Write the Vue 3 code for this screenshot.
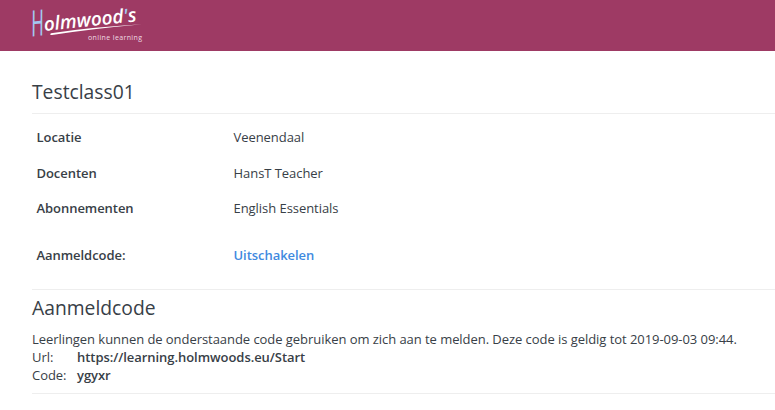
<template>
  <div class="page">
    <header class="topbar">
      <svg class="logo" width="112" height="42" viewBox="0 0 112 42">
        <text class="logo-initial" x="1" y="32.5" textLength="13" lengthAdjust="spacingAndGlyphs" transform="rotate(-6 1 32.5)">H</text>
        <text class="logo-name" x="13.5" y="27" textLength="93" lengthAdjust="spacingAndGlyphs" transform="rotate(-6 13.5 27)">olmwood<tspan class="logo-tick">'</tspan>s</text>
        <path d="M20 29.2 Q60 23.2 111 20.3 Q60 25 21 31 Q18 31 20 29.2Z" fill="#fff" />
        <text class="logo-sub" x="57" y="35.5" textLength="54">online learning</text>
      </svg>
    </header>
    <main class="content">
      <h1 class="title">{{ group.name }}</h1>
      <dl class="details">
        <div v-for="row in rows" :key="row.label" class="row">
          <dt>{{ row.label }}</dt>
          <dd>{{ row.value }}</dd>
        </div>
        <div class="row row-code">
          <dt>Aanmeldcode:</dt>
          <dd><a class="toggle">Uitschakelen</a></dd>
        </div>
      </dl>
      <section class="signup">
        <h2 class="title-code">Aanmeldcode</h2>
        <p>Leerlingen kunnen de onderstaande code gebruiken om zich aan te melden. Deze code is geldig tot {{ group.validUntil }}.</p>
        <div class="line"><span>Url:</span><b>{{ group.url }}</b></div>
        <div class="line"><span>Code:</span><b>{{ group.code }}</b></div>
      </section>
    </main>
  </div>
</template>

<script setup>
const group = {
  name: 'Testclass01',
  url: 'https://learning.holmwoods.eu/Start',
  code: 'ygyxr',
  validUntil: '2019-09-03 09:44'
}

const rows = [
  { label: 'Locatie', value: 'Veenendaal' },
  { label: 'Docenten', value: 'HansT Teacher' },
  { label: 'Abonnementen', value: 'English Essentials' }
]
</script>

<style>
body {
  margin: 0;
  background: #ffffff;
}
</style>

<style scoped>
.page {
  height: 410px;
  overflow: hidden;
  font-family: "Open Sans", "Noto Sans", sans-serif;
  font-size: 13px;
  line-height: 18px;
  color: #384047;
}

.topbar {
  height: 51px;
  box-sizing: border-box;
  padding: 4px 0 0 31px;
  background: #9e3a64;
}

.logo {
  display: block;
  overflow: visible;
}

.logo-initial {
  font-size: 36px;
  font-style: italic;
  font-weight: 400;
  fill: #a3c8f0;
}

.logo-name {
  font-size: 19px;
  font-style: italic;
  font-weight: 600;
  fill: #ffffff;
}

.logo-tick {
  fill: #a3c8f0;
}

.logo-sub {
  font-size: 7px;
  fill: #efdae3;
}

.content {
  padding-left: 32px;
}

.title,
.title-code {
  margin: 0;
  font-size: 19.3px;
  font-weight: 400;
  line-height: 26px;
}

.title {
  padding: 28px 0 8px;
  border-bottom: 1px solid #eeeeee;
}

.details {
  margin: 0;
  padding: 14px 0 25px 4.5px;
  border-bottom: 1px solid #eeeeee;
  letter-spacing: -0.05px;
}

.row {
  display: grid;
  grid-template-columns: 197px 1fr;
  height: 35.5px;
}

.row dt {
  font-weight: 600;
}

.row dd {
  margin: 0;
}

.row-code {
  height: 18px;
  padding-top: 11px;
}

.toggle {
  color: #3f8ae0;
  font-weight: 600;
}

.signup {
  padding: 5px 0 9px;
  border-bottom: 1px solid #eeeeee;
}

.signup p {
  margin: 9px 0 0;
  white-space: nowrap;
  letter-spacing: -0.053px;
}

.line {
  display: flex;
  letter-spacing: -0.05px;
}

.line span {
  width: 45px;
}

.line b {
  font-weight: 600;
}
</style>
